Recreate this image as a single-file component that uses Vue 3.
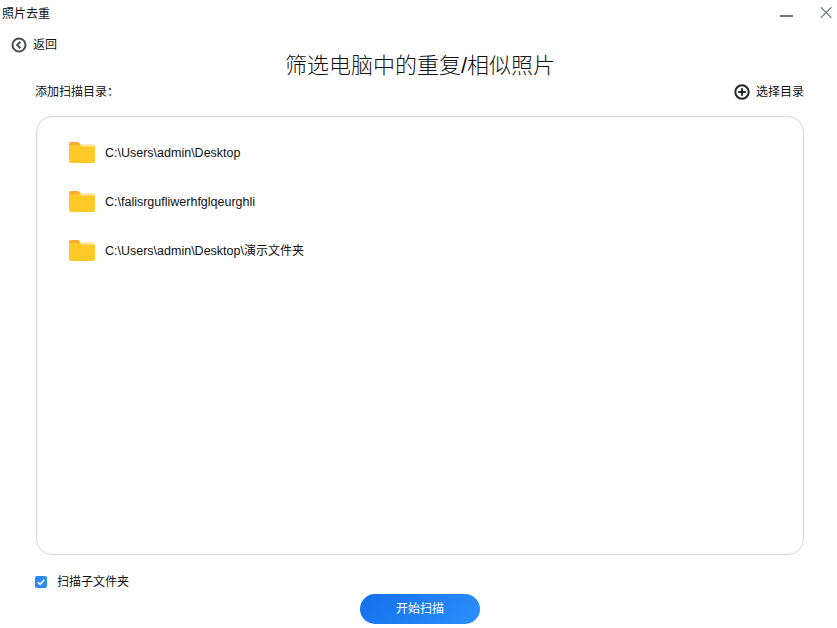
<script setup>
const folders = [
  { path: 'C:\\Users\\admin\\Desktop', suffix: '' },
  { path: 'C:\\falisrgufliwerhfglqeurghli', suffix: '' },
  { path: 'C:\\Users\\admin\\Desktop\\', suffix: '演示文件夹' },
]
</script>

<template>
  <div class="app">
    <header class="titlebar">
      <span class="app-name">照片去重</span>
      <div class="win-controls">
        <svg width="14" height="14" viewBox="0 0 14 14"><rect x="1" y="9" width="13" height="2" fill="#6f7480" /></svg>
        <svg width="14" height="14" viewBox="0 0 14 14"><path d="M2.800 1.300 13.500 11.700M13.500 1.300 2.800 11.700" stroke="#80858f" stroke-width="1.400" fill="none" /></svg>
      </div>
    </header>
    <div class="back">
      <svg width="16" height="16" viewBox="0 0 16 16">
        <circle cx="8" cy="8" r="6.500" fill="none" stroke="#4b4e57" stroke-width="2" />
        <path d="M9.400 4.800 6.200 8l3.200 3.200" fill="none" stroke="#4b4e57" stroke-width="2" />
      </svg>
      <span>返回</span>
    </div>
    <main class="content">
      <h1 class="title">筛选电脑中的重复/相似照片</h1>
      <div class="toolbar">
        <span class="label">添加扫描目录：</span>
        <div class="choose">
          <svg width="16" height="16" viewBox="0 0 16 16">
            <circle cx="8" cy="8" r="6.700" fill="none" stroke="#24262b" stroke-width="2" />
            <path d="M8 4.200v7.600M4.200 8h7.600" stroke="#24262b" stroke-width="2" />
          </svg>
          <span>选择目录</span>
        </div>
      </div>
      <section class="list">
        <div v-for="f in folders" :key="f.path + f.suffix" class="row">
          <svg class="folder" width="26" height="21" viewBox="0 0 26 21">
            <path d="M0 2a2 2 0 0 1 2-2h6.500a2 2 0 0 1 1.500.7L12 3.500H0z" fill="#ffa92e" />
            <path d="M11 2h13a2 2 0 0 1 2 2v1H11z" fill="#ffe9a8" />
            <path d="M0 5a2 2 0 0 1 2-2h9l1.500 1.500H26V19a2 2 0 0 1-2 2H2a2 2 0 0 1-2-2z" fill="#ffc928" />
          </svg>
          <span class="path">{{ f.path }}<span class="suffix">{{ f.suffix }}</span></span>
        </div>
      </section>
      <label class="subfolders">
        <span class="check">
          <svg width="12" height="12" viewBox="0 0 12 12"><path d="M2.800 6.200 5.100 8.400 9.300 3.800" fill="none" stroke="#fff" stroke-width="1.500" /></svg>
        </span>
        <span>扫描子文件夹</span>
      </label>
      <button class="start">开始扫描</button>
    </main>
  </div>
</template>

<style scoped>
.app {
  width: 837px;
  height: 628px;
  box-sizing: border-box;
  overflow: hidden;
  background: #fff;
  color: #111;
  font-family: "Liberation Sans", "Noto Sans CJK SC", sans-serif;
  font-size: 12px;
  line-height: 16px;
}
.titlebar {
  height: 37px;
  display: flex;
  justify-content: space-between;
  padding: 6px 5px 0 2px;
  box-sizing: border-box;
}
.win-controls {
  display: flex;
  gap: 25px;
}
.back {
  height: 16px;
  padding-left: 11px;
  display: flex;
  align-items: center;
  gap: 6px;
}
.content {
  padding: 0 33px 0 36px;
  display: flex;
  flex-direction: column;
}
.title {
  margin: 0;
  height: 26px;
  text-align: center;
  font-size: 22px;
  line-height: 26px;
  font-weight: 300;
  color: #111;
}
.toolbar {
  display: flex;
  justify-content: space-between;
  align-items: center;
  height: 16px;
  margin-top: 5px;
}
.label {
  margin-left: -1px;
}
.choose {
  display: flex;
  align-items: center;
  gap: 6px;
}
.list {
  height: 439px;
  box-sizing: border-box;
  margin-top: 16px;
  border: 1px solid #d3d7e2;
  border-radius: 16px;
  padding: 25px 32px;
  display: flex;
  flex-direction: column;
  gap: 28px;
}
.row {
  display: flex;
  align-items: center;
  gap: 10px;
  height: 21px;
}
.path {
  font-size: 12.500px;
}
.suffix {
  font-size: 12px;
}
.subfolders {
  display: flex;
  align-items: center;
  gap: 10px;
  height: 16px;
  margin-top: 19px;
  margin-left: -1px;
}
.check {
  width: 12px;
  height: 12px;
  border-radius: 2px;
  background: #2f8bf5;
  display: flex;
}
.start {
  align-self: center;
  width: 120px;
  height: 30px;
  margin-top: 4px;
  border: 0;
  border-radius: 15px;
  background: linear-gradient(135deg, #136fec, #2d8ffb);
  color: #fff;
  font: inherit;
  padding: 0;
}
</style>
